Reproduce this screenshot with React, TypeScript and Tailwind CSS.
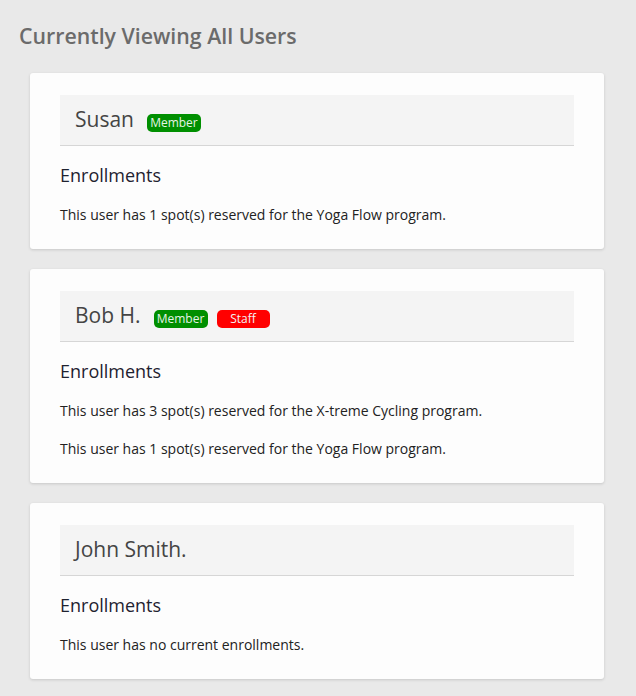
const users = [
  {
    name: "Susan",
    badges: ["member"],
    enrollments: ["This user has 1 spot(s) reserved for the Yoga Flow program."],
  },
  {
    name: "Bob H.",
    badges: ["member", "staff"],
    enrollments: [
      "This user has 3 spot(s) reserved for the X-treme Cycling program.",
      "This user has 1 spot(s) reserved for the Yoga Flow program.",
    ],
  },
  {
    name: "John Smith.",
    badges: [],
    enrollments: [],
  },
];

function Badge({ kind }: { kind: string }) {
  if (kind === "staff") {
    return (
      <span className="inline-flex h-[18px] w-[53px] items-center justify-center rounded-[5px] bg-[#ff0000] text-[12px] leading-none text-[#f3f3f3]">
        Staff
      </span>
    );
  }
  return (
    <span className="inline-flex h-[18px] w-[54px] items-center justify-center rounded-[5px] bg-[#008f00] text-[12px] leading-none font-medium text-[#e6f3e6]">
      Member
    </span>
  );
}

export default function App() {
  return (
    <div
      className="min-h-[696px] bg-[#e9e9e9] px-[19px] pt-[22px] pb-5"
      style={{ fontFamily: '"Open Sans", "Noto Sans", sans-serif' }}
    >
      <h1 className="text-[21.3px] leading-[28px] font-semibold text-[#6b6b6b]">
        Currently Viewing All Users
      </h1>
      <div className="mt-[23px] flex flex-col gap-5 pl-[11px] pr-[13px]">
        {users.map((u) => (
          <div
            key={u.name}
            className="rounded-[3px] bg-[#fdfdfd] px-[30px] pt-[22px] pb-[23px] shadow-[0_1px_3px_rgba(0,0,0,0.15)]"
          >
            <div className="flex h-[51px] items-center border-b border-[#d6d6d6] bg-[#f4f4f4] px-[15px]">
              <span className="text-[21px] text-[#444444]">{u.name}</span>
              {u.badges.length > 0 && (
                <div className="ml-[13px] flex items-center gap-[9px] pt-[5px]">
                  {u.badges.map((b) => (
                    <Badge key={b} kind={b} />
                  ))}
                </div>
              )}
            </div>
            <h2 className="mt-[16px] text-[18px] leading-[26px] text-[#1f2230]">
              Enrollments
            </h2>
            <div className="mt-[16px] flex flex-col gap-[16px]">
              {u.enrollments.length > 0 ? (
                u.enrollments.map((e) => (
                  <p key={e} className="text-[14px] leading-[22px] text-[#222222]">
                    {e}
                  </p>
                ))
              ) : (
                <p className="text-[14px] leading-[22px] text-[#222222]">
                  This user has no current enrollments.
                </p>
              )}
            </div>
          </div>
        ))}
      </div>
    </div>
  );
}
